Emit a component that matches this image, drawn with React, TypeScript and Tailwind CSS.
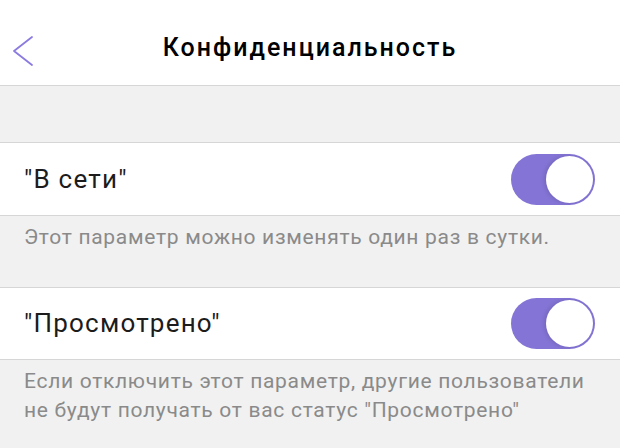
import React from 'react'

function Toggle() {
  return (
    <div className="flex h-[51px] w-[84px] items-center justify-end rounded-full bg-[#8474d6] p-[2px]">
      <div className="h-[47px] w-[47px] rounded-full bg-white shadow-[-2px_0_4px_rgba(0,0,0,0.12)]" />
    </div>
  )
}

export default function App() {
  return (
    <div className="h-[448px] w-[620px] overflow-hidden bg-[#f1f1f1] font-['Roboto',sans-serif]">
      {/* Header */}
      <div className="relative flex h-[86px] items-center justify-center border-b border-[#d6d6d6] bg-white">
        <svg className="absolute left-[12px] top-[35px]" width="24" height="32" viewBox="0 0 24 32" fill="none">
          <path d="M20 2 L2 16 L20 30" stroke="#8b7be0" strokeWidth="1.8" strokeLinecap="round" strokeLinejoin="round" />
        </svg>
        <h1 className="pt-[10px] text-[25px] font-medium tracking-[2px] text-black">Конфиденциальность</h1>
      </div>

      <div className="h-[56px]" />

      {/* Row 1 */}
      <div className="flex h-[74px] items-center justify-between border-y border-[#d6d6d6] bg-white pl-[24px] pr-[25px]">
        <span className="text-[26px] tracking-[1.2px] text-[#1c1c1c]">"В сети"</span>
        <Toggle />
      </div>
      <div className="h-[71px] px-[24px] pt-[7px] text-[21px] leading-[29px] tracking-[0.7px] text-[#8a8a8a]">
        Этот параметр можно изменять один раз в сутки.
      </div>

      {/* Row 2 */}
      <div className="flex h-[73px] items-center justify-between border-y border-[#d6d6d6] bg-white pl-[24px] pr-[25px]">
        <span className="text-[26px] tracking-[1.2px] text-[#1c1c1c]">"Просмотрено"</span>
        <Toggle />
      </div>
      <div className="px-[24px] pt-[7px] text-[21px] leading-[29px] tracking-[0.7px] text-[#8a8a8a]">
        <p>Если отключить этот параметр, другие пользователи</p>
        <p>не будут получать от вас статус "Просмотрено"</p>
      </div>
    </div>
  )
}
